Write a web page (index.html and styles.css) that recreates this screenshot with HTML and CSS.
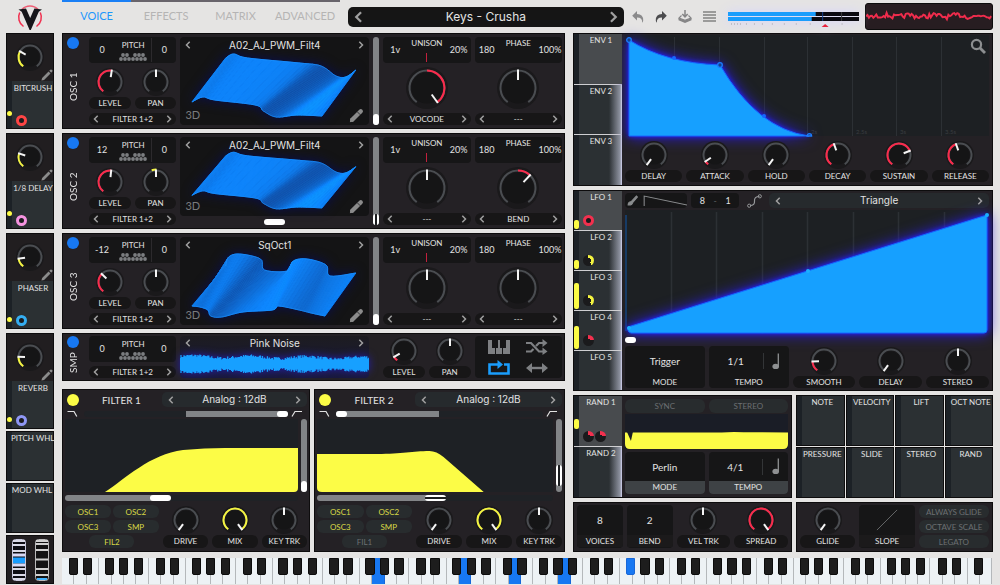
FILE: index.html
```
<!DOCTYPE html>
<html lang="en">

<head>
    <meta charset="utf-8">
    <title>Keys - Crusha</title>
    <meta name="viewport" content="width=device-width, initial-scale=1">
    <link rel="stylesheet" href="styles.css">
</head>

<body>
    <!-- shared icons -->
    <svg class="defs" width="0" height="0" aria-hidden="true">
        <symbol id="prev" viewBox="0 0 6 8"><path d="M4.7 .8 1.5 4l3.2 3.2" fill="none" stroke="currentColor" stroke-width="1.5"/></symbol>
        <symbol id="next" viewBox="0 0 6 8"><path d="M1.3 .8 4.5 4 1.3 7.2" fill="none" stroke="currentColor" stroke-width="1.5"/></symbol>
        <symbol id="pencil" viewBox="0 0 14 14"><path d="M.5 13.5 1.3 10.4 8.8 2.9l2.3 2.3-7.5 7.5zM9.6 2.1l1.3-1.3q.8-.6 1.5 0l.8.8q.6.7 0 1.4l-1.3 1.4z" fill="currentColor"/></symbol>
        <symbol id="marker" viewBox="0 0 14 14"><path d="M3 11 11 3" stroke="currentColor" stroke-width="4" stroke-linecap="round"/><path d="M.8 13.200 1.600 9.600l2.800 2.800z" fill="currentColor"/><path d="m7.600 3.400 3 3" stroke="#141415" stroke-width=".7"/></symbol>
        <symbol id="keys" viewBox="0 0 28 8">
            <g fill="currentColor"><circle cx="4" cy="2" r="1.9"/><circle cx="8" cy="2" r="1.9"/><circle cx="16" cy="2" r="1.9"/><circle cx="20" cy="2" r="1.9"/><circle cx="24" cy="2" r="1.9"/><circle cx="2" cy="6" r="1.9"/><circle cx="6" cy="6" r="1.9"/><circle cx="10" cy="6" r="1.9"/><circle cx="14" cy="6" r="1.9"/><circle cx="18" cy="6" r="1.9"/><circle cx="22" cy="6" r="1.9"/><circle cx="26" cy="6" r="1.9"/></g>
        </symbol>
        <symbol id="note" viewBox="0 0 8 17"><path d="M6.3.5v13" stroke="currentColor" stroke-width="1.3"/><ellipse cx="3.7" cy="13.4" rx="3.3" ry="2.7" fill="currentColor"/></symbol>
        <symbol id="lowpass" viewBox="0 0 12 7"><path d="M.5 1.5h6.5l2.8 5" fill="none" stroke="currentColor" stroke-width="1.2"/></symbol>
        <symbol id="highpass" viewBox="0 0 12 7"><path d="M1 6.5 4 1.5h7" fill="none" stroke="currentColor" stroke-width="1.2"/></symbol>
    </svg>

    <header class="top">
        <a class="logo" href="#" aria-label="Home">
            <svg viewBox="0 0 26 26" width="26" height="26">
                <g fill="none" stroke="#f0304f" stroke-width="1.500"><path d="M5 5.300A11.300 11.300 0 0 1 21 5.300" opacity=".75"/><path d="M23.300 8.500A11.300 11.300 0 0 1 19.500 22.500M2.700 8.500A11.300 11.300 0 0 0 6.500 22.500"/></g>
                <path d="M1.500 5.500 9 4.500l4.200 9.500 4.200-9.500 7.600 1-3.200 2.200L13.800 26h-1.200L4.700 7.700z" fill="#15161a"/>
            </svg>
        </a>
        <nav class="tabs">
            <button class="tab active">VOICE</button>
            <button class="tab">EFFECTS</button>
            <button class="tab">MATRIX</button>
            <button class="tab">ADVANCED</button>
        </nav>
        <div class="preset">
            <button aria-label="Previous preset"><svg class="arrow big"><use href="#prev"/></svg></button>
            <button class="name">Keys - Crusha</button>
            <button aria-label="Next preset"><svg class="arrow big"><use href="#next"/></svg></button>
        </div>
        <div class="tools">
            <button aria-label="Undo"><svg viewBox="0 0 12 12" width="12" height="12"><path d="M5 0v3q6.5.2 6.2 6.6-.1 1.2-1 2.2Q10.6 6.600 5 6.600V9.500L.2 4.700z" fill="#8a8a8b"/></svg></button>
            <button aria-label="Redo"><svg viewBox="0 0 12 12" width="12" height="12"><path d="M7 0v3Q.5 3.200.8 9.600q.1 1.200 1 2.200Q1.400 6.600 7 6.600V9.500l4.800-4.800z" fill="#4c4c4e"/></svg></button>
            <button aria-label="Save"><svg viewBox="0 0 14 13" width="14" height="13"><path d="M7 0v6M4.300 4 7 6.800 9.700 4" fill="none" stroke="#858586" stroke-width="1.500"/><path d="M3.500 5.500 1 8l6 2.300L13 8l-2.500-2.500" fill="none" stroke="#858586" stroke-width="1.200"/><path d="M.5 8v2.200L7 13l6.500-2.800V8L7 10.600z" fill="#858586"/></svg></button>
            <button aria-label="Menu"><svg viewBox="0 0 13 11" width="13" height="11"><path d="M0 1h13M0 4h13M0 7h13M0 10h13" stroke="#828283" stroke-width="1.700"/></svg></button>
        </div>
        <div class="volume">
            <svg viewBox="0 0 132 17" preserveAspectRatio="none">
                <path d="M0 0h132v4H0zM0 5h132v4H0z" fill="#0b0a10"/>
                <path d="M0 0h88v4H0zM0 5h84v4H0z" fill="#1a9dfc"/>
                <path d="M95 0v9" stroke="#15408c"/><path d="M114 0v9" stroke="#3a3a3c"/>
                <path d="M3 12h10M18 12h1M26 12h1M34 12h1M44 12h1M56 12h1M68 12h1M82 12h1M114 12h1" stroke="#c0bfc6" stroke-width="2" stroke-dasharray="1 2"/>
                <path d="m94 15 3.500-3 3.500 3z" fill="#e8203c"/>
            </svg>
        </div>
        <div class="scope"><svg id="scope" viewBox="0 0 128 26" preserveAspectRatio="none"></svg></div>
    </header>

    <main class="synth">
        <aside class="side">
            <section class="macro">
                <div class="macro-knob"><label class="knob" aria-label="Bitcrush"><input type="range" data-color="yellow" value="29"></label><svg class="edit"><use href="#pencil"/></svg></div>
                <div class="source"><span class="name">BITCRUSH</span><i class="dot"></i><i class="ring red"></i></div>
            </section>
            <section class="macro">
                <div class="macro-knob"><label class="knob" aria-label="1/8 Delay"><input type="range" data-color="yellow" value="25"></label><svg class="edit"><use href="#pencil"/></svg></div>
                <div class="source"><span class="name">1/8 DELAY</span><i class="dot"></i><i class="ring pink"></i></div>
            </section>
            <section class="macro">
                <div class="macro-knob"><label class="knob" aria-label="Phaser"><input type="range" data-color="yellow" value="16"></label><svg class="edit"><use href="#pencil"/></svg></div>
                <div class="source"><span class="name">PHASER</span><i class="dot low"></i><i class="ring cyan"></i></div>
            </section>
            <section class="macro">
                <div class="macro-knob"><label class="knob" aria-label="Reverb"><input type="range" data-color="yellow" value="19"></label><svg class="edit"><use href="#pencil"/></svg></div>
                <div class="source"><span class="name">REVERB</span><i class="dot low"></i><i class="ring violet"></i></div>
            </section>
            <div class="wheels">
                <div class="source"><span class="name">PITCH WHL</span></div>
                <div class="source"><span class="name">MOD WHL</span></div>
                <div class="wheel-box">
                    <svg viewBox="0 0 14 42" width="14" height="42">
                        <rect x=".5" y=".5" width="13" height="41" rx="3" fill="#0d0d12" stroke="#c9c9dc"/>
                        <path d="M1 2h12M1 6h12M1 12h12M1 30h12M1 36h12M1 40h12" stroke="#d9d9e6" stroke-width="2"/>
                        <path d="M1 18.500h12v6H1z" fill="#189dff"/><path d="M1 16h12M1 26h12" stroke="#d9d9f6" stroke-width="3"/>
                    </svg>
                    <svg viewBox="0 0 14 42" width="14" height="42">
                        <rect x=".5" y=".5" width="13" height="41" rx="3" fill="#121213" stroke="#b9b9ba"/>
                        <path d="M1 2h12M1 5h12M1 11h12M1 20.500h12M1 30h12M1 36h12" stroke="#d0d0d0" stroke-width="2"/>
                        <path d="M2 40h10" stroke="#42b4ff" stroke-width="2"/>
                    </svg>
                </div>
            </div>
        </aside>

        <div class="voice">
            <section class="panel osc">
                <div class="power"><button class="led blue" aria-label="Oscillator 1 on"></button><h2>OSC 1</h2></div>
                <div class="tune">
                    <div class="box pitch"><span>0</span><div><b>PITCH</b><svg><use href="#keys"/></svg></div><span class="cents">0</span></div>
                    <div class="pair">
                        <label class="knob"><input type="range" value="53"><span class="pill">LEVEL</span></label>
                        <label class="knob"><input type="range" data-bipolar value="50"><span class="pill">PAN</span></label>
                    </div>
                    <div class="switcher"><button aria-label="Previous"><svg class="arrow"><use href="#prev"/></svg></button><span>FILTER 1+2</span><button aria-label="Next"><svg class="arrow"><use href="#next"/></svg></button></div>
                </div>
                <div class="wave">
                    <svg class="surface" data-table="pwm" viewBox="0 0 190 88" preserveAspectRatio="none"></svg>
                    <div class="wave-name"><button aria-label="Previous wavetable"><svg class="arrow"><use href="#prev"/></svg></button><span>A02_AJ_PWM_Filt4</span><button aria-label="Next wavetable"><svg class="arrow"><use href="#next"/></svg></button></div>
                    <button class="view">3D</button>
                    <svg class="edit"><use href="#marker"/></svg>
                </div>
                <input class="slider vertical" type="range" value="0" aria-label="Frame 1">
                <div class="warp">
                    <div class="box readout"><span>1v</span><b>UNISON</b><span>20%</span><i class="tick"></i></div>
                    <label class="knob large" aria-label="Vocode amount"><input type="range" data-bipolar value="100"></label>
                    <div class="switcher"><button aria-label="Previous"><svg class="arrow"><use href="#prev"/></svg></button><span>VOCODE</span><button aria-label="Next"><svg class="arrow"><use href="#next"/></svg></button></div>
                </div>
                <div class="warp">
                    <div class="box readout"><span>180</span><b>PHASE</b><span>100%</span></div>
                    <label class="knob large" aria-label="Distortion amount"><input type="range" data-bipolar value="50"></label>
                    <div class="switcher"><button aria-label="Previous"><svg class="arrow"><use href="#prev"/></svg></button><span>---</span><button aria-label="Next"><svg class="arrow"><use href="#next"/></svg></button></div>
                </div>
            </section>

            <section class="panel osc">
                <div class="power"><button class="led blue" aria-label="Oscillator 2 on"></button><h2>OSC 2</h2></div>
                <div class="tune">
                    <div class="box pitch"><span>12</span><div><b>PITCH</b><svg><use href="#keys"/></svg></div><span class="cents">0</span></div>
                    <div class="pair">
                        <label class="knob"><input type="range" value="52"><span class="pill">LEVEL</span></label>
                        <label class="knob"><input type="range" data-bipolar data-mod value="50"><span class="pill">PAN</span></label>
                    </div>
                    <div class="switcher"><button aria-label="Previous"><svg class="arrow"><use href="#prev"/></svg></button><span>FILTER 1+2</span><button aria-label="Next"><svg class="arrow"><use href="#next"/></svg></button></div>
                </div>
                <div class="wave-stack">
                    <div class="wave">
                        <svg class="surface" data-table="pwm" viewBox="0 0 190 88" preserveAspectRatio="none"></svg>
                        <div class="wave-name"><button aria-label="Previous wavetable"><svg class="arrow"><use href="#prev"/></svg></button><span>A02_AJ_PWM_Filt4</span><button aria-label="Next wavetable"><svg class="arrow"><use href="#next"/></svg></button></div>
                        <button class="view">3D</button>
                        <svg class="edit"><use href="#marker"/></svg>
                    </div>
                    <input class="slider wide-thumb bare" type="range" value="50" aria-label="Spectral morph">
                </div>
                <input class="slider vertical hollow" type="range" value="0" aria-label="Frame 2">
                <div class="warp">
                    <div class="box readout"><span>1v</span><b>UNISON</b><span>20%</span><i class="tick"></i></div>
                    <label class="knob large" aria-label="Spectral amount"><input type="range" data-bipolar value="50"></label>
                    <div class="switcher"><button aria-label="Previous"><svg class="arrow"><use href="#prev"/></svg></button><span>---</span><button aria-label="Next"><svg class="arrow"><use href="#next"/></svg></button></div>
                </div>
                <div class="warp">
                    <div class="box readout"><span>180</span><b>PHASE</b><span>100%</span></div>
                    <label class="knob large" aria-label="Bend amount"><input type="range" data-bipolar value="65"></label>
                    <div class="switcher"><button aria-label="Previous"><svg class="arrow"><use href="#prev"/></svg></button><span>BEND</span><button aria-label="Next"><svg class="arrow"><use href="#next"/></svg></button></div>
                </div>
            </section>

            <section class="panel osc">
                <div class="power"><button class="led blue" aria-label="Oscillator 3 on"></button><h2>OSC 3</h2></div>
                <div class="tune">
                    <div class="box pitch"><span>-12</span><div><b>PITCH</b><svg><use href="#keys"/></svg></div><span class="cents">0</span></div>
                    <div class="pair">
                        <label class="knob"><input type="range" value="34"><span class="pill">LEVEL</span></label>
                        <label class="knob"><input type="range" data-bipolar value="50"><span class="pill">PAN</span></label>
                    </div>
                    <div class="switcher"><button aria-label="Previous"><svg class="arrow"><use href="#prev"/></svg></button><span>FILTER 1+2</span><button aria-label="Next"><svg class="arrow"><use href="#next"/></svg></button></div>
                </div>
                <div class="wave">
                    <svg class="surface" data-table="square" viewBox="0 0 190 88" preserveAspectRatio="none"></svg>
                    <div class="wave-name"><button aria-label="Previous wavetable"><svg class="arrow"><use href="#prev"/></svg></button><span>SqOct1</span><button aria-label="Next wavetable"><svg class="arrow"><use href="#next"/></svg></button></div>
                    <button class="view">3D</button>
                    <svg class="edit"><use href="#marker"/></svg>
                </div>
                <input class="slider vertical" type="range" value="0" aria-label="Frame 3">
                <div class="warp">
                    <div class="box readout"><span>1v</span><b>UNISON</b><span>20%</span><i class="tick"></i></div>
                    <label class="knob large" aria-label="Spectral amount"><input type="range" data-bipolar value="50"></label>
                    <div class="switcher"><button aria-label="Previous"><svg class="arrow"><use href="#prev"/></svg></button><span>---</span><button aria-label="Next"><svg class="arrow"><use href="#next"/></svg></button></div>
                </div>
                <div class="warp">
                    <div class="box readout"><span>180</span><b>PHASE</b><span>100%</span></div>
                    <label class="knob large" aria-label="Distortion amount"><input type="range" data-bipolar value="50"></label>
                    <div class="switcher"><button aria-label="Previous"><svg class="arrow"><use href="#prev"/></svg></button><span>---</span><button aria-label="Next"><svg class="arrow"><use href="#next"/></svg></button></div>
                </div>
            </section>

            <section class="panel osc sample">
                <div class="power"><button class="led blue" aria-label="Sampler on"></button><h2>SMP</h2></div>
                <div class="tune">
                    <div class="box pitch"><span>0</span><div><b>PITCH</b><svg><use href="#keys"/></svg></div><span>0</span></div>
                    <div class="switcher"><button aria-label="Previous"><svg class="arrow"><use href="#prev"/></svg></button><span>FILTER 1+2</span><button aria-label="Next"><svg class="arrow"><use href="#next"/></svg></button></div>
                </div>
                <div class="sample-wave">
                    <div class="wave-name"><button aria-label="Previous sample"><svg class="arrow"><use href="#prev"/></svg></button><span>Pink Noise</span><button aria-label="Next sample"><svg class="arrow"><use href="#next"/></svg></button></div>
                    <svg id="noise" viewBox="0 0 190 24" preserveAspectRatio="none"></svg>
                </div>
                <div class="pair">
                    <label class="knob"><input type="range" value="8"><span class="pill">LEVEL</span></label>
                    <label class="knob"><input type="range" data-bipolar value="50"><span class="pill">PAN</span></label>
                </div>
                <div class="box modes">
                    <button aria-label="Keytrack"><svg viewBox="0 0 22 14" width="22" height="14"><path d="M0 0h4v8h3v6H0zM8 14V8h2V0h2v8h2v6zM15 14V8h3V0h4v14z" fill="#7e8083"/></svg></button>
                    <button aria-label="Random phase"><svg viewBox="0 0 22 16" width="22" height="16"><path d="M0 4h5l8 8.500h5M0 12.500h5l2.500-2.600M10 7l3-3h5" fill="none" stroke="#7e8083" stroke-width="2.200"/><path d="m16.500 0 5 4-5 4zM16.500 8.500l5 4-5 3.500z" fill="#7e8083"/></svg></button>
                    <button aria-label="Loop"><svg viewBox="0 0 22 16" width="22" height="16"><path d="M6.500 4.500h-5v9h19v-9H16M5 4.500h6" fill="none" stroke="#1a9dfc" stroke-width="2.600"/><path d="m9.500 0 5.500 4.500L9.500 9z" fill="#1a9dfc"/></svg></button>
                    <button aria-label="Bounce"><svg viewBox="0 0 22 10" width="22" height="10"><path d="M3 5h16" stroke="#7e8083" stroke-width="2.400"/><path d="M6 0 0 5l6 5zM16 0l6 5-6 5z" fill="#7e8083"/></svg></button>
                </div>
            </section>

            <div class="filters">
                <section class="panel filter">
                    <div class="filter-head"><button class="led yellow" aria-label="Filter 1 on"></button><h3>FILTER 1</h3>
                        <div class="selector"><button aria-label="Previous model"><svg class="arrow"><use href="#prev"/></svg></button><span>Analog : 12dB</span><button aria-label="Next model"><svg class="arrow"><use href="#next"/></svg></button></div>
                    </div>
                    <div class="blend"><svg><use href="#lowpass"/></svg><input class="slider" type="range" value="100" aria-label="Filter 1 blend" style="--from: 50%; --to: 100%"><svg><use href="#highpass"/></svg></div>
                    <div class="response">
                        <svg viewBox="0 0 233 73" preserveAspectRatio="none"><path d="M40 73C60 60 85 35 118 31Q140 29 160 29H233V69Q233 73 229 73z" fill="#fcfc46"/></svg>
                        <input class="slider vertical" type="range" value="0" aria-label="Filter 1 resonance">
                        <input class="slider wide-thumb" type="range" value="40" aria-label="Filter 1 cutoff" style="--from: 0%; --to: 42%">
                    </div>
                    <div class="filter-foot">
                        <div class="inputs"><button class="on">OSC1</button><button class="on">OSC2</button><button class="on">OSC3</button><button class="on">SMP</button><button class="on last">FIL2</button></div>
                        <label class="knob"><input type="range" value="0"><span class="pill">DRIVE</span></label>
                        <label class="knob"><input type="range" data-color="yellow" value="100"><span class="pill">MIX</span></label>
                        <label class="knob"><input type="range" data-bipolar value="50"><span class="pill">KEY TRK</span></label>
                    </div>
                </section>
                <section class="panel filter">
                    <div class="filter-head"><button class="led yellow" aria-label="Filter 2 on"></button><h3>FILTER 2</h3>
                        <div class="selector"><button aria-label="Previous model"><svg class="arrow"><use href="#prev"/></svg></button><span>Analog : 12dB</span><button aria-label="Next model"><svg class="arrow"><use href="#next"/></svg></button></div>
                    </div>
                    <div class="blend"><svg><use href="#lowpass"/></svg><input class="slider" type="range" value="0" aria-label="Filter 2 blend" style="--from: 0%; --to: 50%"><svg><use href="#highpass"/></svg></div>
                    <div class="response">
                        <svg viewBox="0 0 235 73" preserveAspectRatio="none"><path d="M0 35H60C85 35 95 32 112 32Q119 32 126 38L166 73H5Q0 73 0 69z" fill="#fcfc46"/></svg>
                        <input class="slider vertical hollow tall-thumb" type="range" value="12" aria-label="Filter 2 resonance">
                        <input class="slider wide-thumb hollow" type="range" value="50" aria-label="Filter 2 cutoff" style="--from: 0%; --to: 50%">
                    </div>
                    <div class="filter-foot">
                        <div class="inputs"><button class="on">OSC1</button><button class="on">OSC2</button><button class="on">OSC3</button><button class="on">SMP</button><button class="last">FIL1</button></div>
                        <label class="knob"><input type="range" value="0"><span class="pill">DRIVE</span></label>
                        <label class="knob"><input type="range" data-color="yellow" value="100"><span class="pill">MIX</span></label>
                        <label class="knob"><input type="range" data-bipolar value="50"><span class="pill">KEY TRK</span></label>
                    </div>
                </section>
            </div>
        </div>

        <div class="modulation">
            <section class="panel mod env">
                <div class="mod-tabs">
                    <button class="active">ENV 1</button>
                    <button>ENV 2</button>
                    <button>ENV 3</button>
                </div>
                <div class="mod-body">
                    <div class="graph">
                        <svg viewBox="0 0 364 101" preserveAspectRatio="none">
                            <path d="M49.500 2v99M94.500 2v99M139.500 2v99M182.500 2v99M227.500 2v99M271.500 2v99M316.500 2v99" stroke="#2c3034"/>
                            <g class="axis"><text x="186" y="99">2s</text><text x="231" y="99">2.5s</text><text x="275" y="99">3s</text><text x="320" y="99">3.5s</text></g>
                            <path class="glow" d="M4 5Q40 28 95 30Q132 94 184 101H4z" fill="#16a0ff" stroke="#1668ff"/>
                            <g fill="#16408c" stroke="#1b7dff" stroke-width="1.300"><circle cx="4" cy="5" r="2.300"/><circle cx="95" cy="30" r="2.300"/><path d="M182 101a2.300 2.300 0 0 1 4.600 0z"/></g>
                            <g fill="#1668ff"><circle cx="49" cy="23" r="2"/><circle cx="139" cy="81" r="2"/></g>
                        </svg>
                        <button class="zoom" aria-label="Zoom"><svg viewBox="0 0 16 16" width="16" height="16"><circle cx="6.500" cy="6.500" r="4.600" fill="none" stroke="#8c8e90" stroke-width="2.200"/><path d="m10 10 5 5" stroke="#8c8e90" stroke-width="2.800"/></svg></button>
                    </div>
                    <div class="knob-row">
                        <label class="knob"><input type="range" value="0"><span class="pill">DELAY</span></label>
                        <label class="knob"><input type="range" value="7"><span class="pill">ATTACK</span></label>
                        <label class="knob"><input type="range" value="0"><span class="pill">HOLD</span></label>
                        <label class="knob"><input type="range" value="43"><span class="pill">DECAY</span></label>
                        <label class="knob"><input type="range" value="74"><span class="pill">SUSTAIN</span></label>
                        <label class="knob"><input type="range" value="43"><span class="pill">RELEASE</span></label>
                    </div>
                </div>
            </section>

            <section class="panel mod lfo">
                <div class="mod-tabs">
                    <button class="active">LFO 1<i class="bar" style="--level: 9px"></i><i class="mini full"></i></button>
                    <button>LFO 2<i class="bar" style="--level: 9px"></i><i class="mini yellow"></i></button>
                    <button>LFO 3<i class="bar" style="--level: 26px"></i><i class="mini yellow"></i></button>
                    <button>LFO 4<i class="bar" style="--level: 23px"></i><i class="mini red"></i></button>
                    <button>LFO 5</button>
                </div>
                <div class="mod-body">
                    <div class="lfo-head">
                        <button class="box brush" aria-label="Paint">
                            <svg viewBox="0 0 60 15" preserveAspectRatio="none"><path d="M3 12q0-3 3-3.500L11 3l1 1-4.500 5.500Q6.500 12.500 3 12z" fill="#8a8c8e" stroke="#8a8c8e"/><path d="M18.500 13V3L60 12" fill="none" stroke="#8a8c8e"/></svg>
                        </button>
                        <div class="box grid-size"><span>8</span><span class="dash">-</span><span>1</span></div>
                        <button class="curve" aria-label="Smooth"><svg viewBox="0 0 15 14" width="15" height="14"><path d="M3 11.500Q8 11.500 7.500 7T12.500 2.500" fill="none" stroke="#96989a" stroke-width="1.200"/><circle cx="2.200" cy="11.700" r="1.600" fill="none" stroke="#96989a"/><circle cx="12.800" cy="2.300" r="1.600" fill="none" stroke="#96989a"/></svg></button>
                        <div class="selector"><button aria-label="Previous shape"><svg class="arrow"><use href="#prev"/></svg></button><span>Triangle</span><button aria-label="Next shape"><svg class="arrow"><use href="#next"/></svg></button></div>
                    </div>
                    <div class="graph">
                        <svg viewBox="0 0 364 124" preserveAspectRatio="none">
                            <path d="M46.500 2v122M91.500 2v122M137.500 2v122M182.500 2v122M228.500 2v122M273.500 2v122M319.500 2v122" stroke="#2c3034" stroke-width="1.500"/>
                            <path d="M1 5v116" stroke="#1256a8"/>
                            <path class="glow" d="M3 117 362 5V120Q362 123 359 123H6Q2 122 3 117z" fill="#16a0ff" stroke="#1668ff"/>
                            <g fill="#1ab0ff"><circle cx="4" cy="118" r="2"/><circle cx="183" cy="61" r="2"/><circle cx="362" cy="5" r="2"/></g>
                        </svg>
                    </div>
                    <input class="slider bare" type="range" value="0" aria-label="Phase">
                    <div class="lfo-foot">
                        <button class="box value"><span>Trigger</span><b>MODE</b></button>
                        <div class="box value tempo"><span>1/1</span><svg><use href="#note"/></svg><b>TEMPO</b></div>
                        <label class="knob"><input type="range" value="18"><span class="pill">SMOOTH</span></label>
                        <label class="knob"><input type="range" value="0"><span class="pill">DELAY</span></label>
                        <label class="knob"><input type="range" data-bipolar value="50"><span class="pill">STEREO</span></label>
                    </div>
                </div>
            </section>

            <div class="row">
                <section class="panel mod rand">
                    <div class="mod-tabs">
                        <button class="active">RAND 1<i class="bar raised" style="--level: 10px"></i><i class="mini red"></i><i class="mini red second"></i></button>
                        <button>RAND 2</button>
                    </div>
                    <div class="mod-body">
                        <div class="toggles"><button>SYNC</button><button>STEREO</button></div>
                        <svg class="perlin" viewBox="0 0 165 35" preserveAspectRatio="none"><path d="M0 0h165v35H0z" fill="#1a1d26"/><path d="M0 18.500H98Q108 17.500 120 18.200L165 18.500V30Q165 35 160 35H5Q0 35 0 30z" fill="#fcfc46"/><path d="m2 18 4 9 2-9z" fill="#1a1d26"/></svg>
                        <div class="rand-foot">
                            <button class="box value capped"><span>Perlin</span><b>MODE</b></button>
                            <div class="box value capped tempo"><span>4/1</span><svg><use href="#note"/></svg><b>TEMPO</b></div>
                        </div>
                    </div>
                </section>
                <div class="sources">
                    <div class="source"><span class="name">NOTE</span></div>
                    <div class="source"><span class="name">VELOCITY</span></div>
                    <div class="source"><span class="name">LIFT</span></div>
                    <div class="source"><span class="name">OCT NOTE</span></div>
                    <div class="source"><span class="name">PRESSURE</span></div>
                    <div class="source"><span class="name">SLIDE</span></div>
                    <div class="source"><span class="name">STEREO</span></div>
                    <div class="source"><span class="name">RAND</span></div>
                </div>
            </div>

            <div class="row">
                <section class="panel play">
                    <div class="box value"><span>8</span><b>VOICES</b></div>
                    <div class="box value"><span>2</span><b>BEND</b></div>
                    <label class="knob"><input type="range" data-bipolar value="50"><span class="pill">VEL TRK</span></label>
                    <label class="knob"><input type="range" value="100"><span class="pill">SPREAD</span></label>
                </section>
                <section class="panel play glide">
                    <label class="knob"><input type="range" value="0"><span class="pill">GLIDE</span></label>
                    <div class="box value"><svg viewBox="0 0 24 24" width="22" height="22"><path d="M1 23 23 1" stroke="#6b6d6f"/></svg><b>SLOPE</b></div>
                    <div class="toggles"><button>ALWAYS GLIDE</button><button>OCTAVE SCALE</button><button>LEGATO</button></div>
                </section>
            </div>
        </div>

        <div class="keyboard" id="keyboard"></div>
    </main>
    <script src="script.js"></script>
</body>

</html>
```
FILE: styles.css
```
* {
    box-sizing: border-box;
}

body {
    margin: 0;
    background: #e5e4e3;
    color: #e2e2e2;
    font: 8px/12px Lato, "Liberation Sans", sans-serif;
}

button {
    margin: 0;
    padding: 0;
    border: 0;
    background: none;
    color: inherit;
    font: inherit;
    cursor: pointer;
}

h2, h3, b {
    margin: 0;
    font-weight: 400;
}

i {
    display: block;
}

svg {
    display: block;
}

.defs {
    position: absolute;
}

/* header */
.top {
    display: flex;
    align-items: center;
    height: 33px;
    padding: 0 7px 0 6px;
}

.logo {
    display: flex;
    justify-content: center;
    width: 48px;
    margin-right: 8px;
}

.tabs {
    display: flex;
    flex: 0 1 279px;
    align-self: flex-start;
    border-top: 2px solid #68646b;
}

.tab {
    flex: 1;
    height: 30px;
    margin-top: -2px;
    border-top: 2px solid transparent;
    color: #b5b4b4;
    font-size: 11px;
}

.tab.active {
    border-color: #1a7ff5;
    color: #1d97fb;
}

.preset {
    display: flex;
    flex: 1 1 277px;
    align-items: center;
    height: 20px;
    margin: 0 8px;
    padding: 0 6px;
    border-radius: 5px;
    background: #151515;
    color: #9a9a9a;
    font: 12px/20px Inter, "Liberation Sans", sans-serif;
}

.preset .name {
    flex: 1;
    color: #e4e4e4;
}

.arrow {
    width: 6px;
    height: 8px;
    color: #a0a0a0;
}

.arrow.big {
    width: 9px;
    height: 12px;
}

.tools {
    display: flex;
    align-items: center;
    gap: 11px;
    margin-right: 12px;
}

.volume {
    flex: 0 1 132px;
    margin-right: 6px;
    padding-top: 7px;
}

.volume svg {
    width: 100%;
    height: 17px;
    filter: drop-shadow(0 0 6px #d5d3ff);
}

.scope {
    flex: 0 1 128px;
    height: 27px;
    margin-top: -1px;
    border: 1px solid #0c0c0c;
    border-radius: 3px;
    background: #271d21;
}

.scope svg {
    width: 100%;
    height: 100%;
}

/* page grid */
.synth {
    display: grid;
    grid-template-columns: 48px minmax(0, 503fr) minmax(0, 420fr);
    gap: 6px 8px;
    padding: 0 7px 0 6px;
}

.side {
    grid-row: 1 / 3;
}

.voice, .modulation {
    display: flex;
    flex-direction: column;
    gap: 4px;
}

.panel {
    border: 1px solid #0d0c0d;
    background: #242125;
}

.box {
    border-radius: 4px;
    background: #161617;
}

.pill, .switcher {
    border-radius: 6px;
    background: #171617;
    text-align: center;
}

.led {
    width: 12px;
    height: 12px;
    border-radius: 50%;
}

.led.blue {
    background: #1778f2;
}

.led.yellow {
    background: #fcfc46;
}

/* macros */
.side {
    display: flex;
    flex-direction: column;
    gap: 4px;
}

.macro, .wheel-box {
    border: 1px solid #0d0c0d;
    background: #211e20;
}

.macro-knob {
    display: grid;
    height: 47px;
    padding-top: 8px;
}

.macro-knob > * {
    grid-area: 1 / 1;
}

.edit {
    width: 12px;
    height: 12px;
    color: #8b8b8b;
}

.macro-knob .edit {
    place-self: end;
}

.source {
    position: relative;
    min-width: 0;
    height: 47px;
    padding-left: 6px;
    background: linear-gradient(90deg, #1c2126 5px, #2b3033 5px);
    text-align: center;
    white-space: nowrap;
}

.source .name {
    display: block;
}

.macro .source {
    padding-top: 1px;
}

.dot {
    position: absolute;
    bottom: 12px;
    left: 0;
    width: 5px;
    height: 5px;
    border-radius: 50%;
    background: #fcfc46;
}

.dot.low {
    bottom: 6px;
}

.ring {
    position: absolute;
    bottom: 2px;
    left: 9px;
    width: 11px;
    height: 11px;
    border: 3px solid #ff4545;
    border-radius: 50%;
    background: #1c1c1e;
}

.ring.pink {
    border-color: #f593e0;
}

.ring.cyan {
    border-color: #35aef2;
}

.ring.violet {
    border-color: #8f97f5;
}

.wheels {
    display: flex;
    flex-direction: column;
    gap: 2px;
    margin-top: -2px;
}

.wheels .source, .sources .source {
    height: 50px;
    padding-left: 4px;
    border: 1px solid #0d0c0d;
}

.wheel-box {
    display: flex;
    justify-content: space-around;
    align-items: center;
    height: 49px;
}

/* knobs */
.knob {
    display: grid;
    grid-template-rows: 30px auto;
    min-width: 0;
}

.knob input {
    appearance: none;
    grid-area: 1 / 1;
    width: 30px;
    height: 30px;
    margin: 0;
    justify-self: center;
    background: none;
    cursor: pointer;
}

.knob input::-webkit-slider-thumb {
    appearance: none;
    width: 0;
    height: 0;
}

.knob svg {
    grid-area: 1 / 1;
    place-self: center;
    width: 30px;
    height: 30px;
    overflow: visible;
    pointer-events: none;
}

.knob.large {
    grid-template-rows: 50px;
    place-items: center;
}

.knob.large input, .knob.large svg {
    width: 44px;
    height: 44px;
}

.track, .arc, .hand {
    fill: none;
    stroke: #4a4d51;
    stroke-width: 2;
}

.arc {
    stroke: #fb2b4c;
}

.arc.yellow {
    stroke: #f4f440;
}

.hand {
    stroke: #f4f4f4;
}

/* sliders */
.slider {
    appearance: none;
    display: block;
    min-width: 0;
    width: 100%;
    height: 6px;
    margin: 0;
    border-radius: 3px;
    background: linear-gradient(90deg, transparent var(--from), #828487 var(--from), #828487 var(--to), transparent var(--to)), #1f2226;
}

.slider::-webkit-slider-thumb {
    appearance: none;
    width: 11px;
    height: 6px;
    border-radius: 3px;
    background: #fff;
}

.slider.wide-thumb::-webkit-slider-thumb {
    width: 21px;
}

.slider.bare {
    background: none;
}

.slider.vertical {
    writing-mode: vertical-lr;
    direction: rtl;
    width: 6px;
    height: 0;
    min-height: 100%;
    background: #828487;
}

.slider.vertical::-webkit-slider-thumb {
    width: 6px;
    height: 11px;
}

.slider.vertical.hollow::-webkit-slider-thumb {
    background: linear-gradient(90deg, #fff 2px, #191b1e 2px, #191b1e 4px, #fff 4px);
}

.slider.vertical.tall-thumb::-webkit-slider-thumb {
    height: 21px;
}

.slider.wide-thumb.hollow::-webkit-slider-thumb {
    background: linear-gradient(#fff 2px, #191b1e 2px, #191b1e 4px, #fff 4px);
}

/* oscillators */
.osc {
    display: grid;
    grid-template-columns: 21px 88fr 190fr 6px 88fr 88fr;
    gap: 4px;
    padding: 3px 2px 3px 1px;
}

.power {
    display: flex;
    flex-direction: column;
    align-items: center;
    padding-right: 3px;
}

.power h2 {
    flex: 1;
    writing-mode: vertical-rl;
    transform: rotate(180deg);
    font-size: 10px;
    line-height: 14px;
    text-align: center;
}

.pitch {
    display: grid;
    grid-template-columns: 26px 1fr 25px;
    height: 26px;
    align-items: center;
    text-align: center;
}

.pitch span, .readout span {
    font-size: 9px;
}

.pitch div {
    display: flex;
    flex-direction: column;
    align-items: center;
    gap: 2px;
}

.pitch svg {
    width: 28px;
    height: 8px;
    color: #7b7d80;
}

.pitch b {
    line-height: 11px;
}

.pitch .cents {
    border-left: 1px solid #2c2a2d;
    line-height: 24px;
}

.pair {
    display: grid;
    grid-template-columns: 1fr 1fr;
    gap: 4px;
}

.tune .knob {
    padding-top: 4px;
}

.switcher {
    display: flex;
    justify-content: space-between;
    align-items: center;
    height: 12px;
    padding: 0 4px;
}

.tune .switcher {
    margin-top: 4px;
}

.wave {
    position: relative;
    isolation: isolate;
    display: grid;
    grid-template-columns: 1fr 1fr;
    grid-template-rows: auto 1fr;
    min-width: 0;
    padding: 2px 5px;
    border-radius: 4px;
    background: #141415;
}

/* sits behind the name and the buttons */
.surface {
    position: absolute;
    z-index: -1;
    inset: 0;
    width: 100%;
    height: 100%;
    filter: drop-shadow(0 0 6px #080d50);
}

.wave-name {
    grid-area: 1 / 1 / 2 / 3;
    display: flex;
    justify-content: space-between;
    align-items: center;
    font: 10px/12px Inter, "Liberation Sans", sans-serif;
}

.view {
    place-self: end start;
    color: #7a7b7d;
    font-size: 11px;
    line-height: 16px;
}

.wave .edit {
    place-self: end;
    width: 15px;
    height: 15px;
}

.wave-stack {
    display: flex;
    flex-direction: column;
    gap: 3px;
}

.wave-stack .wave {
    flex: 1;
}

.readout {
    display: grid;
    grid-template-columns: 24px 1fr 24px;
    height: 26px;
    text-align: center;
}

.readout span {
    line-height: 26px;
}

.readout .tick {
    grid-area: 1 / 2;
    place-self: end center;
    width: 1px;
    height: 9px;
    margin-bottom: 1px;
    background: #c2203d;
}

.readout b {
    grid-area: 1 / 2;
}

.sample {
    padding: 2px 2px 2px 1px;
}

.sample .pair {
    grid-column: 5;
}

.sample-wave {
    padding-top: 1px;
    border-radius: 4px;
    background: linear-gradient(#1d1c20, #18183c);
}

.sample-wave .wave-name {
    padding: 0 5px;
}

.sample-wave > svg {
    width: 100%;
    height: 24px;
    margin-top: 3px;
    filter: drop-shadow(0 0 4px #2620b0);
}

.modes {
    display: grid;
    grid-template-columns: 38px 38px;
    justify-content: center;
    place-items: center;
}

.modes button {
    display: grid;
}

/* filters */
.filters {
    display: grid;
    grid-template-columns: 248fr 251fr;
    gap: 4px;
    margin-top: 4px;
}

.filter {
    padding: 2px 2px 3px;
}

.filter-head {
    display: grid;
    grid-template-columns: 16px 1fr 60%;
    align-items: center;
    text-align: center;
}

.filter-head .led {
    margin-left: 2px;
}

.filter-head h3 {
    font-size: 10px;
}

.selector {
    display: flex;
    justify-content: space-between;
    align-items: center;
    height: 15px;
    padding: 0 6px;
    border-radius: 5px;
    background: #262a2d;
    font: 10px/15px Inter, "Liberation Sans", sans-serif;
}

.blend {
    display: grid;
    grid-template-columns: 14px 1fr 14px;
    gap: 3px;
    align-items: center;
    margin: 3px 2px 2px;
}

.blend svg {
    width: 12px;
    height: 7px;
}

.response {
    display: grid;
    grid-template-columns: 1fr 6px;
    gap: 3px;
}

.response > svg {
    width: 100%;
    height: 73px;
    background: #1e2125;
}

.filter-foot {
    display: grid;
    grid-template-columns: 93fr 45fr 45fr 45fr;
    gap: 4px;
    padding-top: 4px;
}

.inputs {
    display: grid;
    grid-template-columns: 1fr 1fr;
    gap: 2px;
}

.inputs button, .toggles button {
    height: 13px;
    border-radius: 6px;
    background: #282c2e;
    color: #6c6f72;
}

.inputs .on {
    color: #d8d846;
}

.inputs .last {
    grid-column: 1 / 3;
    justify-self: center;
    width: 45px;
}

/* envelope, lfo, random */
.mod {
    display: grid;
    grid-template-columns: 48px minmax(0, 1fr);
}

.mod-tabs {
    display: flex;
    flex-direction: column;
    gap: 1px;
    background: #cfcfd2;
}

.mod-tabs button {
    position: relative;
    display: flex;
    flex: 1;
    justify-content: center;
    padding-left: 6px;
    background: linear-gradient(90deg, transparent 35px, #8e93a0 46px, #d3d3f2), linear-gradient(90deg, #1c2126 5px, #2b3033 5px);
}

.mod-tabs .active {
    background: linear-gradient(90deg, #1c2126 5px, #484b4e 5px);
}

.bar {
    position: absolute;
    bottom: 1px;
    left: 0;
    width: 5px;
    height: var(--level);
    border-radius: 2px;
    background: #fcfc46;
}

.bar.raised {
    bottom: 17px;
}

.mini {
    position: absolute;
    bottom: 4px;
    left: 9px;
    width: 11px;
    height: 11px;
    border: 3px solid #1a1a1c;
    border-radius: 50%;
    background: #1a1a1c;
}

.mini.full {
    border-color: #f3304e;
}

.mini.yellow {
    border-color: transparent;
    background: radial-gradient(#1a1a1c 30%, transparent 34%) border-box, conic-gradient(#f4f440 40%, #1a1a1c 40%) border-box;
}

.mini.red {
    border-color: transparent;
    background: radial-gradient(#1a1a1c 20%, transparent 24%) border-box, conic-gradient(#f3304e 22%, #1a1a1c 22%) border-box;
}

.mini.second {
    left: 21px;
}

.mod-body {
    padding: 1px 3px 3px;
}

.graph {
    display: grid;
    background: #1d2023;
}

.graph > * {
    grid-area: 1 / 1;
}

.graph svg {
    overflow: visible;
}

.graph > svg {
    width: 100%;
}

.env .graph > svg {
    height: 101px;
}

.lfo .graph > svg {
    height: 124px;
}

.glow {
    filter: drop-shadow(0 0 2px #2222ff) drop-shadow(0 0 7px #2a1ce0);
}

.axis {
    fill: #3a3d40;
    font-size: 6px;
}

.zoom {
    place-self: start end;
    padding: 3px;
}

.knob-row {
    display: grid;
    grid-template-columns: repeat(6, 1fr);
    gap: 4px;
    padding-top: 4px;
}

.lfo .mod-body {
    padding: 2px 3px 2px;
}

.lfo-head {
    display: grid;
    grid-template-columns: 62fr 48fr 22fr 219fr;
    gap: 4px;
    margin-bottom: 2px;
}

.brush, .brush svg {
    width: 100%;
    height: 15px;
}

.grid-size {
    display: flex;
    justify-content: space-evenly;
    font-size: 9px;
    line-height: 15px;
}

.dash {
    color: #5a5c5e;
}

.curve {
    display: grid;
    place-items: center;
}

.lfo .slider {
    margin: 3px 0;
}

.lfo-foot {
    display: grid;
    grid-template-columns: 80fr 80fr 63fr 63fr 63fr;
    gap: 4px;
}

.value {
    display: grid;
    grid-template-rows: 30px 12px;
    min-width: 0;
    place-items: center;
    overflow: hidden;
}

.value span {
    font-size: 10px;
}

.value b {
    width: 100%;
    text-align: center;
}

.tempo {
    grid-template-columns: 55fr 25fr;
}

.tempo svg {
    width: 8px;
    height: 17px;
    color: #8e9092;
}

.tempo b {
    grid-column: 1 / 3;
}

.tempo span {
    width: 100%;
    border-right: 1px solid #333537;
    line-height: 16px;
    text-align: center;
}

.capped {
    grid-template-rows: 29px 13px;
}

.capped b {
    background: #3e4245;
    line-height: 13px;
}

.row {
    display: grid;
    grid-template-columns: minmax(0, 219fr) minmax(0, 197fr);
    gap: 4px;
}

.rand .mod-body {
    padding: 3px;
}

.toggles {
    display: grid;
    gap: 2px;
}

.rand .toggles {
    grid-template-columns: 1fr 1fr;
    gap: 4px;
}

.rand .toggles button {
    height: 14px;
}

.perlin {
    width: 100%;
    height: 35px;
    margin: 1px 0 3px;
}

.rand-foot {
    display: grid;
    grid-template-columns: 1fr 1fr;
    gap: 4px;
}

.sources {
    display: grid;
    grid-template-columns: repeat(4, minmax(0, 1fr));
    gap: 1px;
}

.sources .source {
    height: auto;
}

.play {
    display: grid;
    grid-template-columns: 46fr 46fr 54fr 54fr;
    gap: 4px;
    padding: 2px 3px 3px;
}

.play.glide {
    grid-template-columns: 56fr 56fr 71fr;
}

.play .value b {
    background: #1b1a1b;
}

/* keyboard */
.keyboard {
    position: relative;
    display: flex;
    grid-column: 2 / 4;
    height: 26px;
}

.white {
    flex: 1;
    border-right: 1px solid #b4b8bb;
    background: #edf2f5;
}

.black {
    position: absolute;
    top: 0;
    width: 1%;
    height: 17px;
    border: 1px solid #0c0c0c;
    border-radius: 0 0 2px 2px;
    background: #1d1d1d;
}

.white.held, .black.held {
    border-color: #1767d8;
    background: #1778f2;
}
```
FILE: script.js
```
const SWEEP = 144;

function point(r, deg) {
    const a = deg * Math.PI / 180;
    return (r * Math.sin(a)).toFixed(2) + " " + (-r * Math.cos(a)).toFixed(2);
}

function arc(r, from, to) {
    if (from > to) [from, to] = [to, from];
    return `M${point(r, from)}A${r} ${r} 0 ${to - from > 180 ? 1 : 0} 1 ${point(r, to)}`;
}

// dials drawn over the range inputs
document.querySelectorAll(".knob input").forEach(input => {
    const large = input.parentNode.classList.contains("large");
    const half = large ? 22 : 15;
    const r = large ? 17.5 : 11.5;
    const deg = (input.value / 100 * 2 - 1) * SWEEP;
    const start = "bipolar" in input.dataset ? 0 : -SWEEP;
    let svg = `<svg viewBox="${-half} ${-half} ${half * 2} ${half * 2}">
        <circle r="${half - 1}" fill="#1a191b"/><circle r="${r - 2}" fill="#151516"/>
        <path class="track" d="${arc(r, -SWEEP, SWEEP)}"/>`;
    if (deg != start) svg += `<path class="arc ${input.dataset.color || ""}" d="${arc(r, start, deg)}"/>`;
    if ("mod" in input.dataset) svg += `<path class="arc yellow" d="${arc(r + 1, -20, 2)}"/>`;
    svg += `<path class="hand" d="M${point(r + 1, deg)}L${point(large ? 8 : 5, deg)}"/></svg>`;
    input.insertAdjacentHTML("afterend", svg);
});

// wavetables: front and back frames with a shade for each point
const tables = {
    pwm: {
        front: [[12, 65], [23, 60], [35, 63], [76, 68], [84, 74], [97, 80], [118, 78], [143, 79]],
        back: [[46, 21], [54, 17], [68, 21], [120, 26], [142, 29], [157, 39], [167, 40], [177, 33]],
        shade: [.05, .1, 0, .1, .6, .4, -.2, .05]
    },
    square: {
        front: [[12, 69], [20, 70], [28, 73], [31, 79], [42, 80], [63, 75], [93, 73], [99, 69], [120, 73], [132, 76], [146, 79]],
        back: [[46, 29], [49, 20], [60, 17], [81, 22], [85, 33], [108, 34], [114, 24], [128, 22], [147, 28], [151, 39], [177, 36]],
        shade: [.1, .25, .1, .5, .4, .1, -.1, .1, .35, .2, 0]
    }
};

function smooth(pts, n) {
    const out = [];
    for (let i = 0; i < pts.length - 1; i++) {
        const p = [pts[Math.max(i - 1, 0)], pts[i], pts[i + 1], pts[Math.min(i + 2, pts.length - 1)]];
        for (let k = 0; k < n; k++) {
            const t = k / n;
            out.push(p[0].map((_, d) => .5 * (2 * p[1][d] + (p[2][d] - p[0][d]) * t +
                (2 * p[0][d] - 5 * p[1][d] + 4 * p[2][d] - p[3][d]) * t * t +
                (3 * p[1][d] - p[0][d] - 3 * p[2][d] + p[3][d]) * t * t * t)));
        }
    }
    out.push(pts[pts.length - 1]);
    return out;
}

document.querySelectorAll(".surface").forEach(svg => {
    const t = tables[svg.dataset.table];
    const front = smooth(t.front, 6), back = smooth(t.back, 6);
    const shade = smooth(t.shade.map(s => [s]), 6);
    let html = "";
    for (let i = 0; i < front.length - 1; i++) {
        const s = shade[i][0];
        const color = `rgb(${Math.round(12 + 6 * s)},${Math.round(130 - 80 * s)},${Math.round(250 - 130 * s)})`;
        html += `<path d="M${front[i]}L${back[i]}L${back[i + 1]}L${front[i + 1]}z" fill="${color}" stroke="${color}"/>`;
    }
    const frames = 40;
    for (let f = 0; f <= frames; f++) {
        const m = f / frames;
        const line = front.map((p, i) => [(p[0] + (back[i][0] - p[0]) * m).toFixed(1), (p[1] + (back[i][1] - p[1]) * m).toFixed(1)]);
        html += `<path d="M${line.join("L")}" fill="none" stroke="#1c92ff" stroke-width=".7" opacity="${f == 0 || f == frames ? 1 : .2}"/>`;
    }
    svg.innerHTML = html;
});

// fixed-seed noise for the sample and the scope
let seed = 7;
function random() {
    seed = (seed * 16807) % 2147483647;
    return seed / 2147483647;
}

let noise = "";
for (let x = 0; x <= 190; x++) {
    const h = 6 + 1.2 * Math.sin(x / 9) + 3 * random() - x / 120;
    noise += `M${x} ${(12 - h).toFixed(1)}V${(12 + h).toFixed(1)}`;
}
document.getElementById("noise").innerHTML = `<path d="${noise}" stroke="#17a0ff" stroke-width="1.3"/>`;

const trace = [];
for (let x = 0; x <= 128; x += 1.5) {
    trace.push(x + " " + (12.5 + Math.sin(x / 4) + 5 * (random() - .5)).toFixed(1));
}
document.getElementById("scope").innerHTML = `<path d="M${trace.join("L")}" fill="none" stroke="#f02c4c" stroke-width="2"/>`;

// 128 notes: 75 white keys, black keys pulled towards chromatic spacing
const WHITES = 75;
const held = { white: [25, 32, 36, 40], black: [45] };
const offsets = { 0: .92, 1: 1.05, 3: .81, 4: .97, 5: 1.15 };
let keys = "";
for (let i = 0; i < WHITES; i++) {
    keys += `<button class="white${held.white.includes(i) ? " held" : ""}" aria-label="White key ${i + 1}"></button>`;
}
for (let i = 0; i < WHITES - 1; i++) {
    if (!(i % 7 in offsets)) continue;
    const centre = (i + offsets[i % 7]) / WHITES * 100;
    keys += `<button class="black${held.black.includes(i) ? " held" : ""}" style="left: ${(centre - .5).toFixed(2)}%" aria-label="Black key after ${i + 1}"></button>`;
}
document.getElementById("keyboard").innerHTML = keys;
```
